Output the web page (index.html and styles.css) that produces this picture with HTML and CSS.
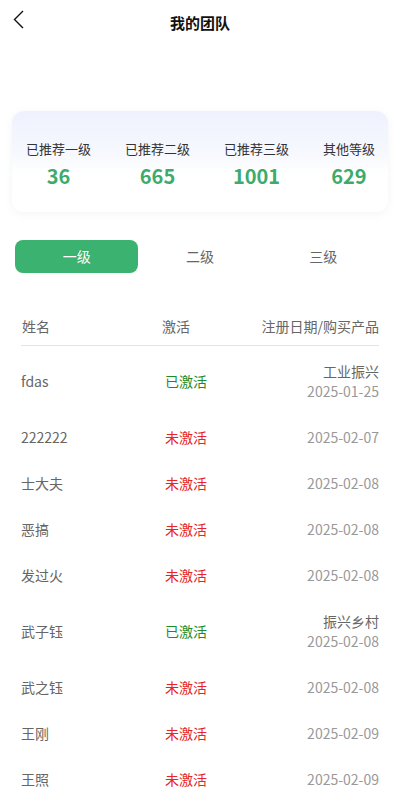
FILE: index.html
```html
<!DOCTYPE html>
<html lang="zh">
<head>
<meta charset="utf-8">
<link rel="stylesheet" href="styles.css">
</head>
<body>
<div class="page">
  <header class="nav">
    <svg class="back" width="12" height="20" viewBox="0 0 12 20"><polyline points="10,1 1.5,9.5 10,18" fill="none" stroke="#111" stroke-width="1.4"/></svg>
    <h1 class="title">我的团队</h1>
  </header>

  <section class="stats">
    <div class="stat"><div class="stat-label">已推荐一级</div><div class="stat-num">36</div></div>
    <div class="stat"><div class="stat-label">已推荐二级</div><div class="stat-num">665</div></div>
    <div class="stat"><div class="stat-label">已推荐三级</div><div class="stat-num">1001</div></div>
    <div class="stat"><div class="stat-label">其他等级</div><div class="stat-num">629</div></div>
  </section>

  <nav class="tabs">
    <div class="tab active">一级</div>
    <div class="tab">二级</div>
    <div class="tab">三级</div>
  </nav>

  <section class="table">
    <div class="row head">
      <div class="c-name">姓名</div>
      <div class="c-status">激活</div>
      <div class="c-info">注册日期/购买产品</div>
    </div>
    <div class="body">
      <div class="row"><div class="c-name">fdas</div><div class="c-status on">已激活</div><div class="c-info"><div class="prod">工业振兴</div><div class="date">2025-01-25</div></div></div>
      <div class="row"><div class="c-name">222222</div><div class="c-status off">未激活</div><div class="c-info"><div class="date">2025-02-07</div></div></div>
      <div class="row"><div class="c-name">士大夫</div><div class="c-status off">未激活</div><div class="c-info"><div class="date">2025-02-08</div></div></div>
      <div class="row"><div class="c-name">恶搞</div><div class="c-status off">未激活</div><div class="c-info"><div class="date">2025-02-08</div></div></div>
      <div class="row"><div class="c-name">发过火</div><div class="c-status off">未激活</div><div class="c-info"><div class="date">2025-02-08</div></div></div>
      <div class="row"><div class="c-name">武子钰</div><div class="c-status on">已激活</div><div class="c-info"><div class="prod">振兴乡村</div><div class="date">2025-02-08</div></div></div>
      <div class="row"><div class="c-name">武之钰</div><div class="c-status off">未激活</div><div class="c-info"><div class="date">2025-02-08</div></div></div>
      <div class="row"><div class="c-name">王刚</div><div class="c-status off">未激活</div><div class="c-info"><div class="date">2025-02-09</div></div></div>
      <div class="row"><div class="c-name">王照</div><div class="c-status off">未激活</div><div class="c-info"><div class="date">2025-02-09</div></div></div>
    </div>
  </section>
</div>
</body>
</html>
```

FILE: styles.css
```css
html, body {
  margin: 0;
  padding: 0;
  background: #fff;
}
body {
  font-family: "Noto Sans CJK SC", "Noto Sans", sans-serif;
  color: #333;
}
.page {
  width: 400px;
  height: 800px;
  overflow: hidden;
}
.nav {
  position: relative;
  height: 44px;
  display: flex;
  align-items: center;
  justify-content: center;
}
.back {
  position: absolute;
  left: 13px;
  top: 10px;
}
.title {
  margin: 0;
  font-size: 15px;
  font-weight: 700;
  color: #111;
  line-height: 20px;
  margin-top: 1px;
}
.stats {
  margin: 67px 12px 0;
  padding: 28px 13px 22px 14px;
  border-radius: 12px;
  background: linear-gradient(180deg, #eef2fd 0%, #f6f8fe 40%, #ffffff 62%);
  box-shadow: 0 2px 8px rgba(120, 130, 160, 0.08);
  display: flex;
  justify-content: space-between;
}
.stat {
  display: flex;
  flex-direction: column;
  align-items: center;
}
.stat-label {
  font-size: 13px;
  line-height: 20px;
  color: #333;
}
.stat-num {
  margin-top: 3px;
  font-size: 20px;
  line-height: 28px;
  font-weight: 700;
  color: #3cab6c;
}
.tabs {
  margin: 28px 15px 0;
  display: grid;
  grid-template-columns: repeat(3, 1fr);
}
.tab {
  height: 33px;
  line-height: 33px;
  text-align: center;
  font-size: 14px;
  color: #666;
  border-radius: 8px;
}
.tab.active {
  background: #3bb26f;
  color: #fff;
}
.table {
  margin: 35px 21px 0;
}
.row {
  display: grid;
  grid-template-columns: 141px 1fr auto;
  align-items: center;
  font-size: 14px;
  line-height: 20px;
  color: #666;
  padding: 13px 0;
}
.row.head {
  padding: 8px 0 9px;
  border-bottom: 1px solid #e3e3e3;
}
.row.head .c-name {
  padding-left: 1px;
}
.body {
  padding-top: 2px;
}
.body .c-status {
  padding-left: 3px;
}
.c-info {
  text-align: right;
}
.on {
  color: #1f8c2a;
}
.off {
  color: #e5252a;
}
.prod {
  color: #666;
}
.date {
  color: #999;
}
```
